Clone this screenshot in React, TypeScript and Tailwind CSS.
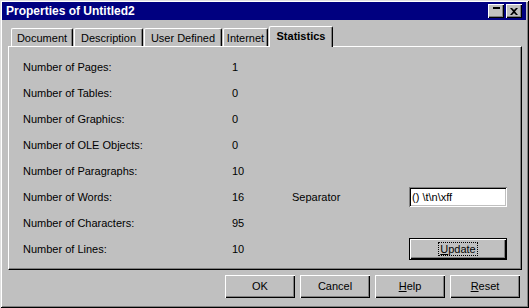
import React from "react";

const rows: { label: string; value: string }[] = [
  { label: "Number of Pages:", value: "1" },
  { label: "Number of Tables:", value: "0" },
  { label: "Number of Graphics:", value: "0" },
  { label: "Number of OLE Objects:", value: "0" },
  { label: "Number of Paragraphs:", value: "10" },
  { label: "Number of Words:", value: "16" },
  { label: "Number of Characters:", value: "95" },
  { label: "Number of Lines:", value: "10" },
];

const tabs = [
  { name: "Document", w: "w-[62px]" },
  { name: "Description", w: "w-[69px]" },
  { name: "User Defined", w: "w-[78px]" },
  { name: "Internet", w: "w-[45px]" },
];

function Btn({ children }: { children: React.ReactNode }) {
  return (
    <div className="flex h-[23px] w-[70px] items-center justify-center bg-[#c0c0c0] shadow-[inset_1px_1px_0_#fff,inset_-1px_-1px_0_#000,inset_-2px_-2px_0_#808080]">
      {children}
    </div>
  );
}

export default function App() {
  return (
    <div className="flex h-[308px] w-[529px] flex-col bg-[#c0c0c0] p-[2px] font-['Liberation_Sans',Arial,sans-serif] text-[11px] text-black shadow-[inset_1px_1px_0_#dfdfdf,inset_-1px_-1px_0_#000,inset_2px_2px_0_#fff,inset_-2px_-2px_0_#808080]">
      {/* title bar */}
      <div className="mr-[1px] flex h-[18px] items-center bg-[#000080] pl-[4px] pr-[4px]">
        <span className="text-[12px] font-bold text-white">Properties of Untitled2</span>
        <div className="ml-auto flex items-center gap-[2px]">
          <div className="flex h-[14px] w-[16px] justify-center bg-[#c0c0c0] pt-[3px] shadow-[inset_1px_1px_0_#fff,inset_-1px_-1px_0_#000,inset_-2px_-2px_0_#808080]">
            <div className="h-[2px] w-[7px] bg-black" />
          </div>
          <div className="flex h-[14px] w-[16px] items-center justify-center bg-[#c0c0c0] shadow-[inset_1px_1px_0_#fff,inset_-1px_-1px_0_#000,inset_-2px_-2px_0_#808080]">
            <svg width="8" height="7" viewBox="0 0 8 7">
              <path d="M0 0h2l2 2 2-2h2L5 3.5 8 7H6L4 5 2 7H0l3-3.5z" fill="#000" />
            </svg>
          </div>
        </div>
      </div>

      <div className="flex flex-1 flex-col pl-[6px] pr-[5px]">
        {/* tabs */}
        <div className="flex h-[26px] items-end gap-[1px] pl-[3px]">
          {tabs.map((t) => (
            <div
              key={t.name}
              className={`flex h-[18px] ${t.w} items-center justify-center rounded-t-[2px] border-l border-t border-r border-l-white border-t-white border-r-black pt-[1px] shadow-[inset_-1px_0_0_#808080]`}
            >
              {t.name}
            </div>
          ))}
          <div className="relative z-10 -mb-[1px] flex h-[21px] w-[64px] items-center justify-center rounded-t-[2px] border-l border-t border-r border-l-white border-t-white border-r-black bg-[#c0c0c0] pb-[2px] font-bold shadow-[inset_-1px_0_0_#808080]">
            Statistics
          </div>
        </div>

        {/* panel */}
        <div className="h-[224px] border-l border-t border-r border-b border-l-white border-t-white border-r-black border-b-black pl-[14px] pt-[7px] shadow-[inset_-1px_-1px_0_#808080]">
          <div className="grid grid-cols-[209px_60px_117px_98px]">
            {rows.map((r, i) => (
              <React.Fragment key={r.label}>
                <div className="flex h-[26px] items-center">{r.label}</div>
                <div className="flex h-[26px] items-center">{r.value}</div>
                <div className="flex h-[26px] items-center">{i === 5 ? "Separator" : ""}</div>
                <div className="flex h-[26px] items-center">
                  {i === 5 && (
                    <div className="flex h-[20px] w-[98px] items-center bg-white pl-[3px] shadow-[inset_1px_1px_0_#808080,inset_-1px_-1px_0_#fff,inset_2px_2px_0_#000,inset_-2px_-2px_0_#c0c0c0]">
                      {"() \\t\\n\\xff"}
                    </div>
                  )}
                  {i === 7 && (
                    <div className="border border-black">
                      <div className="flex h-[20px] w-[96px] items-center justify-center shadow-[inset_1px_1px_0_#fff,inset_-1px_-1px_0_#000,inset_-2px_-2px_0_#808080]">
                        <span className="border border-dotted border-black px-[1px] leading-[12px]">
                          <span className="underline">U</span>pdate
                        </span>
                      </div>
                    </div>
                  )}
                </div>
              </React.Fragment>
            ))}
          </div>
        </div>

        {/* buttons */}
        <div className="mt-[5px] flex justify-end gap-[5px] pr-[2px]">
          <Btn>OK</Btn>
          <Btn>Cancel</Btn>
          <Btn>
            <span className="underline">H</span>elp
          </Btn>
          <Btn>
            <span className="underline">R</span>eset
          </Btn>
        </div>
      </div>
    </div>
  );
}
